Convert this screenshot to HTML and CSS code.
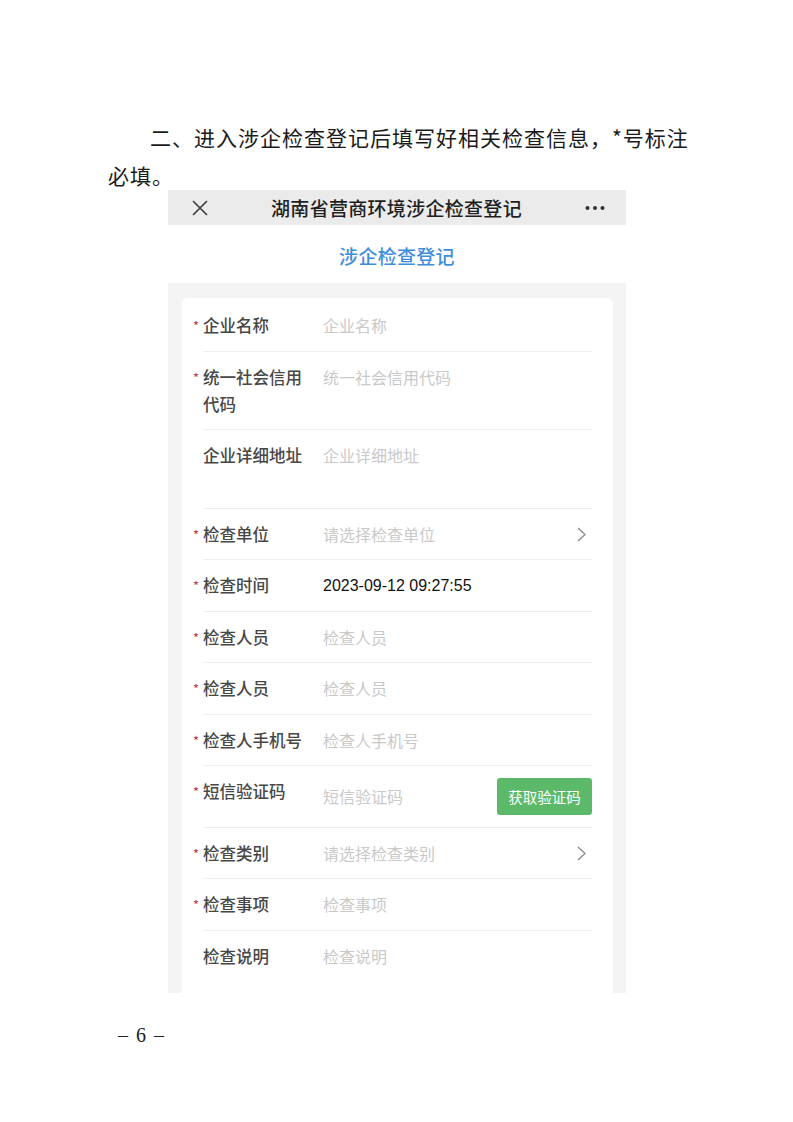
FILE: index.html
```html
<!DOCTYPE html>
<html>
<head>
    <meta charset="utf-8">
    <title>涉企检查登记</title>
    <link rel="stylesheet" href="styles.css">
</head>
<body>
    <div class="page">
        <p class="intro">二、进入涉企检查登记后填写好相关检查信息，*号标注必填。</p>

        <div class="phone">
            <div class="topbar">
                <svg class="close" width="16" height="16" viewBox="0 0 16 16">
                    <path d="M1 1 L15 15 M15 1 L1 15" stroke="#3a3a3a" stroke-width="1.6" fill="none"/>
                </svg>
                <div class="topbar-title">湖南省营商环境涉企检查登记</div>
                <svg class="more" width="20" height="6" viewBox="0 0 20 6">
                    <circle cx="2.5" cy="3" r="2" fill="#333"/>
                    <circle cx="10" cy="3" r="2" fill="#333"/>
                    <circle cx="17.5" cy="3" r="2" fill="#333"/>
                </svg>
            </div>

            <h2 class="form-title">涉企检查登记</h2>

            <div class="form-bg">
                <div class="card">
                    <div class="row">
                        <div class="label"><span class="req">*</span>企业名称</div>
                        <div class="field"><span class="ph">企业名称</span></div>
                    </div>
                    <div class="row">
                        <div class="label"><span class="req">*</span>统一社会信用代码</div>
                        <div class="field"><span class="ph">统一社会信用代码</span></div>
                    </div>
                    <div class="row">
                        <div class="label">企业详细地址</div>
                        <div class="field tall"><span class="ph">企业详细地址</span></div>
                    </div>
                    <div class="row">
                        <div class="label"><span class="req">*</span>检查单位</div>
                        <div class="field">
                            <span class="ph">请选择检查单位</span>
                            <svg class="arrow" width="9" height="15" viewBox="0 0 9 15">
                                <polyline points="1,1 8,7.5 1,14" stroke="#8a8a8a" stroke-width="1.3" fill="none"/>
                            </svg>
                        </div>
                    </div>
                    <div class="row">
                        <div class="label"><span class="req">*</span>检查时间</div>
                        <div class="field"><span class="val">2023-09-12 09:27:55</span></div>
                    </div>
                    <div class="row">
                        <div class="label"><span class="req">*</span>检查人员</div>
                        <div class="field"><span class="ph">检查人员</span></div>
                    </div>
                    <div class="row">
                        <div class="label"><span class="req">*</span>检查人员</div>
                        <div class="field"><span class="ph">检查人员</span></div>
                    </div>
                    <div class="row">
                        <div class="label"><span class="req">*</span>检查人手机号</div>
                        <div class="field"><span class="ph">检查人手机号</span></div>
                    </div>
                    <div class="row">
                        <div class="label"><span class="req">*</span>短信验证码</div>
                        <div class="field">
                            <span class="ph">短信验证码</span>
                            <button type="button" class="code-btn">获取验证码</button>
                        </div>
                    </div>
                    <div class="row">
                        <div class="label"><span class="req">*</span>检查类别</div>
                        <div class="field">
                            <span class="ph">请选择检查类别</span>
                            <svg class="arrow" width="9" height="15" viewBox="0 0 9 15">
                                <polyline points="1,1 8,7.5 1,14" stroke="#8a8a8a" stroke-width="1.3" fill="none"/>
                            </svg>
                        </div>
                    </div>
                    <div class="row">
                        <div class="label"><span class="req">*</span>检查事项</div>
                        <div class="field"><span class="ph">检查事项</span></div>
                    </div>
                    <div class="row">
                        <div class="label">检查说明</div>
                        <div class="field"><span class="ph">检查说明</span></div>
                    </div>
                </div>
            </div>
        </div>

        <div class="page-num">– 6 –</div>
    </div>
</body>
</html>
```

FILE: styles.css
```css
body {
    margin: 0;
    padding: 0;
    background-color: #fff;
    font-family: "Noto Sans CJK SC", "Noto Sans", sans-serif;
    color: #222;
}

.page {
    padding-top: 118px;
}

.intro {
    margin: 0 0 0 108px;
    width: 595px;
    font-size: 21px;
    letter-spacing: 1px;
    line-height: 38px;
    text-indent: 42px;
    color: #1a1a1a;
}

/* phone screenshot */
.phone {
    width: 458px;
    height: 803px;
    margin: -4px 0 0 168px;
    overflow: hidden;
    background-color: #fff;
}

.topbar {
    height: 35px;
    background-color: #ebebeb;
    display: flex;
    align-items: center;
    padding: 0 21px 0 24px;
}

.topbar-title {
    flex: 1;
    text-align: center;
    font-size: 19px;
    font-weight: 500;
    color: #1f1f1f;
    letter-spacing: 0.3px;
}

.form-title {
    margin: 0;
    padding: 18px 0 14px;
    line-height: 26px;
    text-align: center;
    font-size: 19px;
    font-weight: 500;
    color: #3f8ddd;
    letter-spacing: 0.3px;
}

.form-bg {
    background-color: #f4f4f4;
    padding: 15px 13px 0 14px;
}

.card {
    background-color: #fff;
    border-radius: 6px;
    padding: 2px 21px 20px;
}

.row {
    display: flex;
    align-items: flex-start;
    padding: 12px 0 11.5px;
    line-height: 27px;
    border-bottom: 1px solid #efefef;
}

.row:last-child {
    border-bottom: none;
}

.label {
    width: 106px;
    margin-right: 14px;
    font-size: 16.5px;
    font-weight: 500;
    color: #474747;
}

.req {
    display: inline-block;
    width: 10px;
    margin-left: -10px;
    font-size: 13px;
    font-weight: normal;
    color: #c0394a;
    vertical-align: top;
}

.field {
    flex: 1;
    display: flex;
    align-items: center;
    min-height: 27px;
    font-size: 16px;
}

.field.tall {
    align-items: flex-start;
    min-height: 54px;
}

.ph {
    flex: 1;
    color: #c9c9c9;
}

.val {
    flex: 1;
    font-family: "Liberation Sans", Arial, sans-serif;
    font-size: 16px;
    color: #111;
}

.arrow {
    margin-right: 6px;
}

.code-btn {
    height: 37px;
    width: 95px;
    border: none;
    border-radius: 3px;
    background-color: #5cb96a;
    color: #fff;
    font-family: "Noto Sans CJK SC", sans-serif;
    font-size: 14.5px;
    padding: 0;
}

.page-num {
    margin: 30px 0 0 118px;
    font-family: "Liberation Serif", serif;
    font-size: 20px;
    line-height: 24px;
    word-spacing: 3px;
    color: #222;
}
```
